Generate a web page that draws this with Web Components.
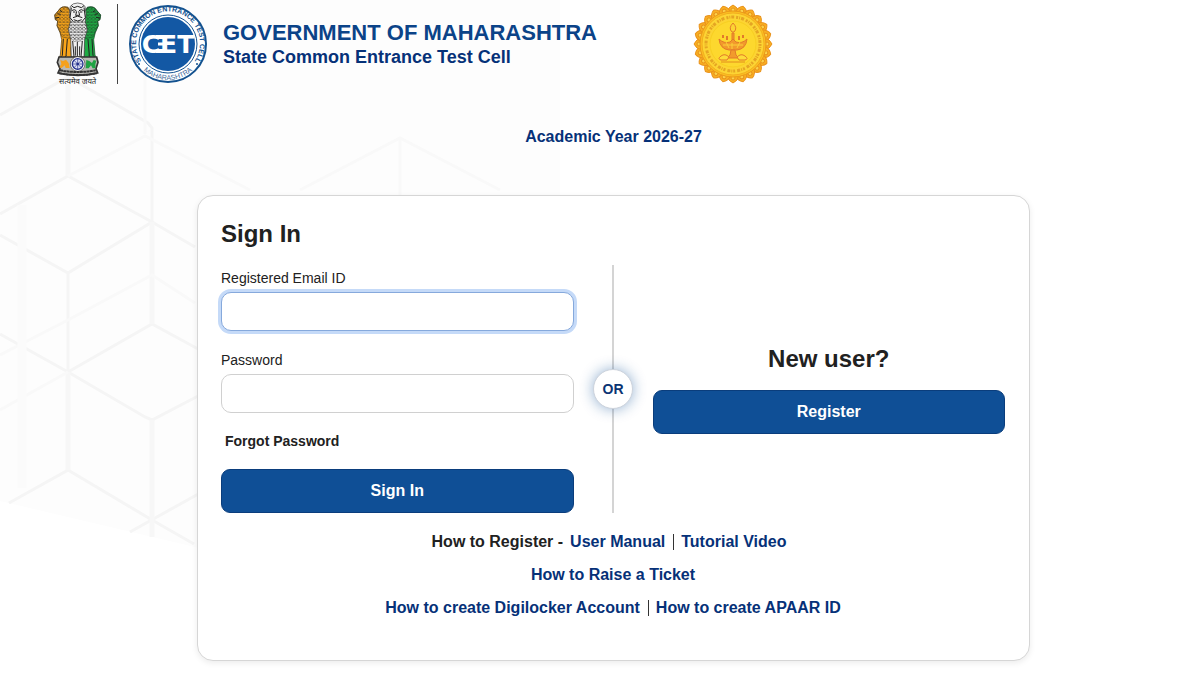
<!DOCTYPE html>
<html lang="en">
<head>
<meta charset="utf-8">
<meta name="viewport" content="width=device-width, initial-scale=1">
<title>State Common Entrance Test Cell</title>
<style>
  body {
    margin: 0;
    background: #fff;
    color: #212121;
    font-family: "Liberation Sans", Arial, sans-serif;
    font-size: 16px;
  }
</style>
</head>
<body>
<cet-page></cet-page>

<script>
function define(name, html) {
  const template = document.createElement('template');
  template.innerHTML = html;

  customElements.define(name, class extends HTMLElement {
    constructor() {
      super();
      this.attachShadow({mode: 'open'});
      this.shadowRoot.appendChild(template.content.cloneNode(true));
    }
  });
}

//
// national-emblem
//

define('national-emblem', `
  <style>
    :host {
      display: block;
      width: 48px;
      height: 84px;
    }
    svg { display: block; }
  </style>
  <svg width="48" height="84" viewBox="42 7 144 252" role="img" aria-label="National emblem">
    <defs>
      <pattern id="fur" width="11" height="10" patternUnits="userSpaceOnUse">
        <path d="M0 2q5 9 10 0M-5 7q5 8 10 0M6 7q5 8 10 0" fill="none" stroke="#222" stroke-width="2"/>
      </pattern>
      <g id="lion">
        <path d="M84 23Q64 17 56 32L44 46 46 60 53 64 51 78 60 98 65 120 61 166 57 175H94L92 150 97 120 98 90 93 40Z"/>
        <path d="M84 23Q64 17 56 32L44 46 46 60 53 64 51 78 60 98 67 112 93 118 98 90 93 40Z" style="fill:url(#fur)" opacity=".7"/>
        <path d="M52 42l10 2M46 55l12-2M60 32l7 5M70 117l-3 50M82 118l-4 50M59 175l8-8M74 175l5-8" fill="none" stroke="#222" stroke-width="3"/>
      </g>
    </defs>
    <use href="#lion" fill="#f9a51a" stroke="#4d3610" stroke-width="2"/>
    <use href="#lion" fill="#1faa44" stroke="#123f20" stroke-width="2" transform="matrix(-1 0 0 1 226 0)"/>
    <path d="M91 20Q98 10 113 10T135 20L138 42 136 66 142 90 134 118 132 172H94L92 118 85 90 91 66 88 42Z" fill="#f1f1f1" stroke="#333" stroke-width="2"/>
    <path d="M91 64L136 64 142 90 133 118 124 126H102L93 118 85 90Z" fill="url(#fur)"/>
    <path d="M94 18l8 6 11-4 11 4 8-6M95 33q8-6 14 0M117 33q7-6 14 0M99 37h7M120 37h7M110 35l-3 12h12l-3-12M99 54q14-9 28 0M101 60q12 8 24 0M94 24l-4 30 10 12M132 24l4 30-10 12M98 124l4 48M112 126v46M127 124l-4 48M106 140v28M119 140v28" fill="none" stroke="#222" stroke-width="3"/>
    <path d="M57 172H170L174 188 168 207 173 220Q114 234 54 220L60 207 52 188Z" fill="#b9b9b4" stroke="#333" stroke-width="5"/>
    <path d="M61 181l8 3 9-4 8 10 3 15H77l-3-8-9 8-7-2 6-10Z" fill="#f5a11c"/>
    <path d="M139 181l9 3 8 6 5-9 8 2-3 11 1 12h-9l-5-9-7 9h-9Z" fill="#20a344"/>
    <circle cx="113" cy="193" r="22" fill="#fff" stroke="#333" stroke-width="2"/>
    <circle cx="113" cy="193" r="16" fill="#dfe2f5" stroke="#24308c" stroke-width="4"/>
    <path d="M113 178v30M98 193h30M102 182l22 22M124 182l-22 22" stroke="#24308c" stroke-width="2"/>
    <circle cx="113" cy="193" r="4" fill="#24308c"/>
    <path d="M60 212Q114 222 167 212M57 221Q114 231 170 221" fill="none" stroke="#333" stroke-width="6" stroke-dasharray="9 1"/>
    <text x="113" y="254" text-anchor="middle" font-size="23" font-family="'Noto Sans', 'Noto Sans Devanagari', sans-serif" fill="#222">सत्यमेव जयते</text>
  </svg>
`);

//
// cet-logo
//

define('cet-logo', `
  <style>
    :host {
      display: block;
      width: 80px;
      height: 80px;
    }
    svg { display: block; }
    text {
      font-family: "Liberation Sans", Arial, sans-serif;
      font-weight: 700;
    }
    .name { font-family: "DejaVu Sans", sans-serif; }
    .place { font-weight: 400; }
  </style>
  <svg width="80" height="80" viewBox="0 0 80 80" role="img" aria-label="State CET Cell">
    <defs>
      <path id="top" d="M14 58A32 32 0 1 1 66 58"/>
      <path id="bottom" d="M4 40A36 36 0 0 0 76 40"/>
    </defs>
    <circle cx="40" cy="40" r="38" fill="#fff" stroke="#14528f" stroke-width="2"/>
    <circle cx="40" cy="40" r="29" fill="#fff" stroke="#14528f" stroke-width="1"/>
    <circle cx="40" cy="40" r="27" fill="#1358a4"/>
    <text class="name" x="40" y="49" text-anchor="middle" font-size="25" fill="#fff">CET</text>
    <path d="M28 33H36M28 47H36" stroke="#fff" stroke-width="4"/>
    <path d="M30 40H36" stroke="#fff" stroke-width="3"/>
    <text font-size="7" fill="#14528f"><textPath href="#top" startOffset="50%" text-anchor="middle">STATE COMMON ENTRANCE TEST CELL</textPath></text>
    <text class="place" font-size="7" fill="#3d6798"><textPath href="#bottom" startOffset="50%" text-anchor="middle">MAHARASHTRA</textPath></text>
    <circle cx="11" cy="60" r="1" fill="#14528f"/>
    <circle cx="69" cy="60" r="1" fill="#14528f"/>
  </svg>
`);

//
// state-seal
//

const sealTemplate = document.createElement('template');
sealTemplate.innerHTML = `
  <style>
    :host {
      display: block;
      width: 80px;
      height: 80px;
    }
    svg { display: block; }
  </style>
  <svg width="80" height="80" viewBox="0 0 80 80" role="img" aria-label="Seal of Maharashtra">
    <g id="petals" fill="#f9b022" stroke="#e9921c" stroke-width="1"></g>
    <circle cx="40" cy="40" r="33" fill="#fbc021" stroke="#eb9a1b"/>
    <circle cx="40" cy="40" r="31" fill="#fcd433" stroke="#f3ad20"/>
    <circle cx="40" cy="40" r="27" fill="none" stroke="#e5a523" stroke-width="3" stroke-dasharray="2 1 1 1 3 2"/>
    <circle cx="40" cy="40" r="23" fill="#fdd82e" stroke="#f8cf20"/>
    <g fill="#f29a2c" stroke="#e27a2a" stroke-width="1">
      <path d="M40 19q-5 5-1 9h2q4-4-1-9Z" fill="#fcd433"/>
      <path d="M39 29h2v9h-2Z"/>
      <path d="M26 35q5 5 11 3l3-3 3 3q6 2 11-3-1 10-10 11h-8q-9-1-10-11Z"/>
      <path d="M30 34v-3M34 36v-4M46 36v-4M50 34v-3" stroke-width="2"/>
      <path d="M38 46h4l1 5 3 3H34l3-3Z"/>
      <path d="M28 52q4-3 8 1l-2 3h-6q-4-1 0-4ZM52 52q-4-3-8 1l2 3h6q4-1 0-4Z" fill="#fddc3a"/>
    </g>
    <path d="M30 41h20M33 38l3 6M44 44l3-6M39 39v6" stroke="#fbd03a" fill="none"/>
    <path d="M28 58H52" stroke="#e28c1d"/>
  </svg>
`;

class StateSeal extends HTMLElement {

  constructor() {
    super();
    this.attachShadow({mode: 'open'});
    this.shadowRoot.appendChild(sealTemplate.content.cloneNode(true));
  }

  connectedCallback() {
    let html = '';
    for (let i = 0; i < 24; i++) {
      html += `<g transform="rotate(${i * 15} 40 40)">
        <path d="M34 9Q35 3 40 1 45 3 46 9Z"/>
        <circle cx="40" cy="6" r="2" fill="#fbd24a"/>
      </g>`;
    }
    this.shadowRoot.getElementById('petals').innerHTML = html;
  }
}

customElements.define('state-seal', StateSeal);

//
// hex-backdrop, the faint pattern behind the page
//

define('hex-backdrop', `
  <style>
    :host {
      display: block;
      position: absolute;
      left: 0;
      top: 0;
      z-index: -1;
    }
    svg { display: block; }
  </style>
  <svg width="560" height="560" viewBox="0 0 560 560" fill="none" aria-hidden="true">
    <path d="M0 0H560V560H250L0 501Z" fill="#fdfdfd"/>
    <g stroke="#f5f5f5" stroke-width="3">
      <path d="M0 115L68 77 148 123 152 128V222L195 247"/>
      <path d="M0 214L68 176 152 222 68 273 0 235"/>
      <path d="M68 273V470L9 503M68 372L0 334M68 372L152 324 200 350M68 372L145 417 152 420 200 395"/>
      <path d="M68 470L152 520 194 544M130 532L200 493"/>
    </g>
    <g stroke="#f7f7f7" stroke-width="5">
      <path d="M68 84V176M152 222V324M152 420V537M68 372V470"/>
    </g>
    <g stroke="#f9f9f9" stroke-width="3">
      <path d="M68 176L145 136 250 190M145 60V134M0 410L68 372M68 320L152 275 195 303M0 355L68 320"/>
      <path d="M300 190L400 138 500 190M400 138V195"/>
    </g>
    <path d="M22 205V488" stroke="#fbfbfb" stroke-width="9"/>
  </svg>
`);

//
// site-header
//

define('site-header', `
  <style>
    :host {
      display: flex;
      align-items: center;
      height: 88px;
      padding-left: 54px;
      color: #063178;
    }
    .rule {
      width: 1px;
      height: 80px;
      margin: 0 10px 0 15px;
      background: #444;
    }
    .name {
      margin: 0 96px 0 15px;
      white-space: nowrap;
    }
    h1, p {
      margin: 0;
      font-weight: 700;
    }
    h1 {
      color: #0b4388;
      font-size: 22px;
      line-height: 26px;
    }
    p {
      font-size: 18px;
      line-height: 22px;
    }
  </style>
  <national-emblem></national-emblem>
  <span class="rule"></span>
  <cet-logo></cet-logo>
  <div class="name">
    <h1>GOVERNMENT OF MAHARASHTRA</h1>
    <p>State Common Entrance Test Cell</p>
  </div>
  <state-seal></state-seal>
`);

//
// form-field
//

const fieldTemplate = document.createElement('template');
fieldTemplate.innerHTML = `
  <style>
    :host {
      display: block;
    }
    label {
      display: block;
      margin-bottom: 5px;
      font-size: 14px;
      line-height: 18px;
    }
    input {
      display: block;
      box-sizing: border-box;
      width: 100%;
      height: 39px;
      padding: 6px 12px;
      border: 1px solid #d0d0d0;
      border-radius: 10px;
      outline: none;
      background: #fff;
      font: inherit;
    }
    :host([active]) input, input:focus {
      border-color: #86a9dc;
      box-shadow: 0 0 0 3px #c5daf8;
    }
  </style>
  <label for="field"></label>
  <input id="field">
`;

class FormField extends HTMLElement {

  constructor() {
    super();
    this.attachShadow({mode: 'open'});
    this.shadowRoot.appendChild(fieldTemplate.content.cloneNode(true));
  }

  connectedCallback() {
    this.shadowRoot.querySelector('label').textContent = this.getAttribute('label');
    this.shadowRoot.querySelector('input').type = this.getAttribute('type') || 'text';
  }
}

customElements.define('form-field', FormField);

//
// main-button
//

define('main-button', `
  <style>
    :host {
      display: block;
    }
    button {
      display: block;
      width: 100%;
      height: 44px;
      border: 1px solid #0a3d7c;
      border-radius: 9px;
      background: #0f4f96;
      color: #fff;
      font: 700 16px "Liberation Sans", Arial, sans-serif;
      cursor: pointer;
    }
  </style>
  <button type="button"><slot></slot></button>
`);

//
// or-divider
//

define('or-divider', `
  <style>
    :host {
      display: grid;
      place-items: center;
      background: linear-gradient(#d4d4d4, #d4d4d4) center / 2px 100% no-repeat;
    }
    span {
      box-sizing: border-box;
      width: 40px;
      height: 40px;
      border: 1px solid #cdd3dc;
      border-radius: 50%;
      background: #fff;
      box-shadow: 0 0 14px rgba(15, 79, 150, .45);
      color: #0b3474;
      font-size: 14px;
      font-weight: 700;
      line-height: 38px;
      text-align: center;
    }
  </style>
  <span>OR</span>
`);

//
// help-links
//

define('help-links', `
  <style>
    :host {
      display: flex;
      flex-direction: column;
      align-items: center;
      gap: 13px;
      font-weight: 700;
      line-height: 20px;
    }
    div {
      display: flex;
      white-space: nowrap;
    }
    a {
      color: #063178;
      text-decoration: none;
    }
    span {
      margin-right: 7px;
    }
    a + a {
      margin-left: 8px;
      padding-left: 8px;
      background: linear-gradient(#333, #333) left center / 1px 16px no-repeat;
    }
    .register {
      margin-right: 8px;
    }
  </style>
  <div class="register"><span>How to Register -</span><a href="#">User Manual</a><a href="#">Tutorial Video</a></div>
  <div><a href="#">How to Raise a Ticket</a></div>
  <div><a href="#">How to create Digilocker Account</a><a href="#">How to create APAAR ID</a></div>
`);

//
// sign-in-card
//

define('sign-in-card', `
  <style>
    :host {
      display: block;
      box-sizing: border-box;
      width: 100%;
      max-width: 833px;
      padding: 24px 24px 42px 23px;
      border: 1px solid #d6d6d6;
      border-radius: 16px;
      background: #fff;
      box-shadow: 0 2px 6px rgba(0, 0, 0, .08);
    }
    h2 {
      margin: 0;
      font-size: 24px;
      line-height: 28px;
    }
    .columns {
      display: grid;
      grid-template-columns: 1fr 79px 1fr;
      margin-top: 17px;
    }
    form {
      display: grid;
      gap: 20px;
      padding-top: 4px;
    }
    .forgot {
      justify-self: start;
      padding-left: 4px;
      color: #212121;
      font-size: 14px;
      font-weight: 700;
      line-height: 16px;
      text-decoration: none;
    }
    .new-user {
      align-self: center;
      text-align: center;
    }
    .new-user h2 {
      margin-bottom: 17px;
    }
    help-links {
      margin-top: 19px;
    }
  </style>
  <h2>Sign In</h2>
  <div class="columns">
    <form>
      <form-field label="Registered Email ID" active></form-field>
      <form-field label="Password" type="password"></form-field>
      <a class="forgot" href="#">Forgot Password</a>
      <main-button>Sign In</main-button>
    </form>
    <or-divider></or-divider>
    <section class="new-user">
      <h2>New user?</h2>
      <main-button>Register</main-button>
    </section>
  </div>
  <help-links></help-links>
`);

//
// cet-page
//

define('cet-page', `
  <style>
    :host {
      display: block;
    }
    main {
      display: flex;
      flex-direction: column;
      align-items: center;
      padding: 39px 0 12px 27px;
    }
    .year {
      margin: 0 0 48px;
      color: #063178;
      font-weight: 700;
      line-height: 20px;
    }
  </style>
  <hex-backdrop></hex-backdrop>
  <site-header></site-header>
  <main>
    <p class="year">Academic Year 2026-27</p>
    <sign-in-card></sign-in-card>
  </main>
`);
</script>
</body>
</html>
